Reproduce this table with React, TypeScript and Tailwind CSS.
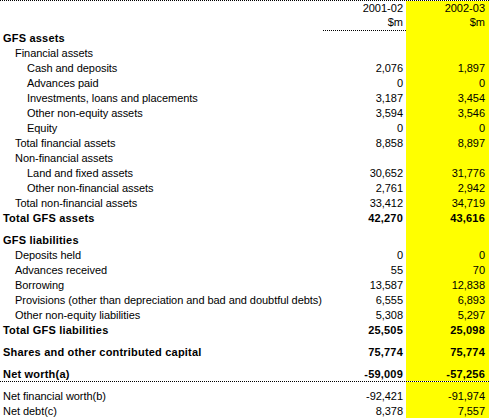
type Row = {
  label: string;
  level?: number;
  bold?: boolean;
  a?: string;
  b?: string;
  gapBefore?: boolean;
  lineAfter?: boolean;
};

const rows: Row[] = [
  { label: 'GFS assets', bold: true },
  { label: 'Financial assets', level: 1 },
  { label: 'Cash and deposits', level: 2, a: '2,076', b: '1,897' },
  { label: 'Advances paid', level: 2, a: '0', b: '0' },
  { label: 'Investments, loans and placements', level: 2, a: '3,187', b: '3,454' },
  { label: 'Other non-equity assets', level: 2, a: '3,594', b: '3,546' },
  { label: 'Equity', level: 2, a: '0', b: '0' },
  { label: 'Total financial assets', level: 1, a: '8,858', b: '8,897' },
  { label: 'Non-financial assets', level: 1 },
  { label: 'Land and fixed assets', level: 2, a: '30,652', b: '31,776' },
  { label: 'Other non-financial assets', level: 2, a: '2,761', b: '2,942' },
  { label: 'Total non-financial assets', level: 1, a: '33,412', b: '34,719' },
  { label: 'Total GFS assets', bold: true, a: '42,270', b: '43,616' },
  { label: 'GFS liabilities', bold: true, gapBefore: true },
  { label: 'Deposits held', level: 1, a: '0', b: '0' },
  { label: 'Advances received', level: 1, a: '55', b: '70' },
  { label: 'Borrowing', level: 1, a: '13,587', b: '12,838' },
  { label: 'Provisions (other than depreciation and bad and doubtful debts)', level: 1, a: '6,555', b: '6,893' },
  { label: 'Other non-equity liabilities', level: 1, a: '5,308', b: '5,297' },
  { label: 'Total GFS liabilities', bold: true, a: '25,505', b: '25,098' },
  { label: 'Shares and other contributed capital', bold: true, a: '75,774', b: '75,774', gapBefore: true },
  { label: 'Net worth(a)', bold: true, a: '-59,009', b: '-57,256', gapBefore: true, lineAfter: true },
  { label: 'Net financial worth(b)', a: '-92,421', b: '-91,974', gapBefore: true },
  { label: 'Net debt(c)', a: '8,378', b: '7,557', lineAfter: true },
];

const grid = 'grid grid-cols-[323px_83px_83px]';

function Spacer() {
  return (
    <div className={`${grid} h-[7px]`}>
      <div />
      <div />
      <div className="bg-[#ffff00]" />
    </div>
  );
}

function DataRow({ row }: { row: Row }) {
  const pad = row.level === 2 ? 'pl-[27px]' : row.level === 1 ? 'pl-[15px]' : 'pl-[3px]';
  const weight = row.bold ? 'font-bold tracking-[0.2px]' : 'tracking-[-0.05px]';
  const line = row.lineAfter ? 'border-b border-dotted border-black' : '';
  return (
    <div className={`${grid} h-[15px] leading-[14px] ${weight} ${line}`}>
      <div className={`${pad} whitespace-nowrap`}>{row.label}</div>
      <div className="text-right pr-[3px]">{row.a}</div>
      <div className="text-right pr-[4px] bg-[#ffff00]">{row.b}</div>
    </div>
  );
}

export default function App() {
  return (
    <div
      className="w-[489px] h-[418px] bg-white text-black text-[11px] border-t border-dotted border-black overflow-hidden"
      style={{ fontFamily: '"Liberation Sans", Arial, sans-serif' }}
    >
      <div className={`${grid} h-[14px] leading-[14px]`}>
        <div />
        <div className="text-right pr-[3px]">2001-02</div>
        <div className="text-right pr-[4px] bg-[#ffff00]">2002-03</div>
      </div>
      <div className={`${grid} h-[16px] leading-[14px]`}>
        <div />
        <div className="text-right pr-[3px] border-b border-dotted border-black">$m</div>
        <div className="text-right pr-[4px] bg-[#ffff00]">$m</div>
      </div>
      {rows.map((row, i) => (
        <div key={i}>
          {row.gapBefore && <Spacer />}
          <DataRow row={row} />
        </div>
      ))}
    </div>
  );
}
